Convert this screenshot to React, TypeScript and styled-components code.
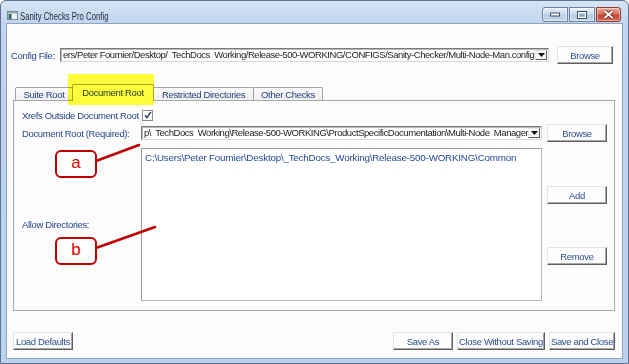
import React from "react";
import styled, { createGlobalStyle } from "styled-components";

const font = `"Liberation Sans", Arial, sans-serif`;
const labelBlue = "#27478c";

const Global = createGlobalStyle`
  html, body { margin: 0; padding: 0; background: #ffffff; }
  body { font-family: ${font}; letter-spacing: -0.35px; }
  * { box-sizing: border-box; }
`;

const Window = styled.div`
  position: relative;
  width: 629px;
  height: 364px;
  display: flex;
  flex-direction: column;
  background: linear-gradient(180deg, #d6e4f5 0px, #c0d5ee 23px, #bad2ec 100%);
  border: 1px solid #5b7290;
  border-radius: 6px 6px 0 0;
  overflow: hidden;
`;

const TitleBar = styled.div`
  height: 23px;
  display: flex;
  align-items: flex-start;
  padding-left: 6px;
`;

const AppIcon = styled.svg`
  margin-top: 10px;
  width: 11px;
  height: 9px;
  flex: none;
`;

const Title = styled.div`
  margin: 8px 0 0 2px;
  font-size: 10.5px;
  line-height: 14px;
  letter-spacing: 0;
  color: #1b2636;
  white-space: nowrap;
  transform: scaleX(0.74);
  transform-origin: left center;
`;

const Controls = styled.div`
  margin: 6px 7px 0 auto;
  display: flex;
  gap: 1px;
`;

const CtlButton = styled.div<{ $close?: boolean; $first?: boolean }>`
  width: ${(p) => (p.$close ? 25 : 26)}px;
  height: 15px;
  display: flex;
  align-items: center;
  justify-content: center;
  border: 1px solid ${(p) => (p.$close ? "#8d3b33" : "#6e829e")};
  border-radius: ${(p) => (p.$close ? "0 3px 3px 0" : p.$first ? "3px 0 0 3px" : "0")};
  background: ${(p) =>
    p.$close
      ? "linear-gradient(180deg, #e9a996 0%, #d67662 45%, #c2432f 55%, #cf6a55 100%)"
      : "linear-gradient(180deg, #e8eff8 0%, #cfdcec 45%, #b8cbe2 55%, #c7d7ea 100%)"};
  box-shadow: inset 0 0 0 1px rgba(255, 255, 255, 0.45);
`;

const Client = styled.div`
  flex: 1;
  margin: 0 6px 5px 6px;
  background: #fcfcfc;
  box-shadow: 0 0 0 1px #8ea5c2;
  display: flex;
  flex-direction: column;
  padding: 0 7px 8px 6px;
`;

const Label = styled.div<{ $w?: number }>`
  font-size: 9.5px;
  color: ${labelBlue};
  white-space: nowrap;
  ${(p) => (p.$w ? `width: ${p.$w}px; flex: none;` : "")}
`;

const ConfigRow = styled.div`
  margin: 22px 2px 0 -2px;
  height: 18px;
  display: flex;
  align-items: center;
`;

const Combo = styled.div`
  height: 14px;
  flex: 1;
  min-width: 0;
  display: flex;
  align-items: center;
  background: #ffffff;
  border: 1px solid;
  border-color: #7a7a7a #d8d8d8 #d8d8d8 #7a7a7a;
  box-shadow: inset 1px 1px 0 #b9b9b9;
  padding: 0 1px 0 2px;
`;

const ComboText = styled.div`
  flex: 1;
  min-width: 0;
  overflow: hidden;
  white-space: pre;
  font-size: 9.5px;
  letter-spacing: -0.45px;
  line-height: 12px;
  color: #1c1c1c;
`;

const DropButton = styled.div`
  width: 12px;
  height: 10px;
  flex: none;
  display: flex;
  align-items: center;
  justify-content: center;
  background: #fafafa;
  border: 1px solid;
  border-color: #e8e8e8 #5c5c5c #5c5c5c #e8e8e8;
`;

const Button = styled.div<{ $w: number; $push?: boolean }>`
  width: ${(p) => p.$w}px;
  height: 18px;
  flex: none;
  display: flex;
  align-items: center;
  justify-content: center;
  background: #fdfdfd;
  border: 1px solid;
  border-color: #e4e4e4 #5e5e5e #5e5e5e #e4e4e4;
  box-shadow: inset -1px -1px 0 #a9a9a9;
  font-size: 9.5px;
  color: #2c4c92;
  white-space: nowrap;
  ${(p) => (p.$push ? "margin-left: auto;" : "")}
`;

const ConfigBrowse = styled(Button)`
  margin-left: 8px;
`;

const TabStrip = styled.div`
  margin-top: 20px;
  margin-bottom: -1px;
  height: 17px;
  display: flex;
  align-items: flex-end;
  padding-left: 2px;
  position: relative;
  z-index: 1;
`;

const Tab = styled.div<{ $w: number; $active?: boolean }>`
  width: ${(p) => p.$w}px;
  height: ${(p) => (p.$active ? 17 : 13)}px;
  margin-bottom: ${(p) => (p.$active ? 0 : 1)}px;
  margin-left: -1px;
  display: flex;
  align-items: center;
  justify-content: center;
  padding-bottom: ${(p) => (p.$active ? 1 : 0)}px;
  background: ${(p) => (p.$active ? "#fcfcfc" : "linear-gradient(180deg, #fbfbfb, #efefef)")};
  border: 1px solid #a3a3a3;
  border-bottom: none;
  border-radius: 2px 2px 0 0;
  font-size: 9.5px;
  color: #24407e;
  white-space: nowrap;
  &:first-child { margin-left: 0; }
`;

const Panel = styled.div`
  flex: 1;
  border: 1px solid #a9a9a9;
  background: #fcfcfc;
  display: grid;
  grid-template-columns: 114px 1fr 60px;
  grid-template-rows: 14px 18px 1fr;
  column-gap: 5px;
  row-gap: 2px;
  padding: 7px 7px 9px 8px;
  align-items: center;
`;

const Check = styled.div`
  width: 11px;
  height: 11px;
  margin-left: 1px;
  background: #ffffff;
  border: 1px solid #8e8f8f;
  display: flex;
  align-items: center;
  justify-content: center;
`;

const ListBox = styled.div`
  align-self: stretch;
  margin-top: 4px;
  background: #ffffff;
  border: 1px solid;
  border-color: #9a9a9a #b5b5b5 #b5b5b5 #9a9a9a;
  padding: 2px 3px;
  font-size: 9.8px;
  letter-spacing: -0.2px;
  line-height: 14px;
  color: #254a96;
  white-space: nowrap;
  overflow: hidden;
`;

const SideLabel = styled(Label)`
  align-self: center;
  margin-top: 4px;
`;

const SideButtons = styled.div`
  align-self: stretch;
  display: flex;
  flex-direction: column;
  padding-top: 42px;
  gap: 43px;
`;

const BottomRow = styled.div`
  margin-top: 21px;
  height: 18px;
  display: flex;
  gap: 4px;
`;

const Highlight = styled.div`
  position: absolute;
  left: 67px;
  top: 73px;
  width: 86px;
  height: 31px;
  background: #ffff3a;
  mix-blend-mode: multiply;
  z-index: 5;
  pointer-events: none;
`;

const Callout = styled.div<{ $top: number }>`
  position: absolute;
  left: 54px;
  top: ${(p) => p.$top}px;
  width: 42px;
  height: 28px;
  border: 2px solid #c00000;
  border-radius: 6px;
  background: #ffffff;
  display: flex;
  align-items: center;
  justify-content: center;
  font-family: "Liberation Sans", Arial, sans-serif;
  letter-spacing: 0;
  font-size: 17px;
  color: #e00000;
  padding-bottom: 2px;
  z-index: 6;
`;

const Lines = styled.svg`
  position: absolute;
  left: 0;
  top: 0;
  width: 627px;
  height: 362px;
  z-index: 6;
  pointer-events: none;
`;

const DownArrow = () => (
  <svg width="7" height="4" viewBox="0 0 7 4">
    <path d="M0 0 H7 L3.5 4 Z" fill="#111" />
  </svg>
);

export default function App() {
  return (
    <>
      <Global />
      <Window>
        <TitleBar>
          <AppIcon viewBox="0 0 11 9">
            <rect x="0.5" y="0.5" width="10" height="8" fill="#eef1f4" stroke="#7d8895" />
            <rect x="1" y="1" width="9" height="1.5" fill="#9aa7b6" />
            <rect x="1.5" y="3" width="3" height="5" fill="#2f6a52" />
          </AppIcon>
          <Title>Sanity Checks Pro Config</Title>
          <Controls>
            <CtlButton $first>
              <svg width="10" height="5" viewBox="0 0 10 5">
                <rect x="0.5" y="1" width="9" height="3" fill="#ffffff" stroke="#3b4f6d" />
              </svg>
            </CtlButton>
            <CtlButton>
              <svg width="10" height="8" viewBox="0 0 10 8">
                <rect x="0.5" y="0.5" width="9" height="7" fill="none" stroke="#3b4f6d" />
                <rect x="1.5" y="1.5" width="7" height="5" fill="none" stroke="#ffffff" />
                <rect x="2.5" y="3" width="5" height="2.5" fill="#8fa3bd" />
              </svg>
            </CtlButton>
            <CtlButton $close>
              <svg width="11" height="9" viewBox="0 0 11 9">
                <path d="M1.5 1 L9.5 8 M9.5 1 L1.5 8" stroke="#6b1d15" strokeWidth="3.6" />
                <path d="M1.5 1 L9.5 8 M9.5 1 L1.5 8" stroke="#ffffff" strokeWidth="2" />
              </svg>
            </CtlButton>
          </Controls>
        </TitleBar>

        <Client>
          <ConfigRow>
            <Label $w={49}>Config File:</Label>
            <Combo>
              <ComboText>
                {"ers/Peter Fournier/Desktop/  TechDocs  Working/Release-500-WORKING/CONFIGS/Sanity-Checker/Multi-Node-Man.config"}
              </ComboText>
              <DropButton>
                <DownArrow />
              </DropButton>
            </Combo>
            <ConfigBrowse $w={56}>Browse</ConfigBrowse>
          </ConfigRow>

          <TabStrip>
            <Tab $w={58}>Suite Root</Tab>
            <Tab $w={82} $active>
              Document Root
            </Tab>
            <Tab $w={101}>Restricted Directories</Tab>
            <Tab $w={70}>Other Checks</Tab>
          </TabStrip>

          <Panel>
            <Label>Xrefs Outside Document Root</Label>
            <Check>
              <svg width="8" height="8" viewBox="0 0 8 8">
                <path d="M1 4.2 L3 6.5 L7 0.8" fill="none" stroke="#2a3d66" strokeWidth="1.4" />
              </svg>
            </Check>
            <div />

            <Label>Document Root (Required):</Label>
            <Combo>
              <ComboText>
                {"p\\  TechDocs  Working\\Release-500-WORKING\\ProductSpecificDocumentation\\Multi-Node  Manager"}
              </ComboText>
              <DropButton>
                <DownArrow />
              </DropButton>
            </Combo>
            <Button $w={60}>Browse</Button>

            <SideLabel>Allow Directories:</SideLabel>
            <ListBox>
              {"C:\\Users\\Peter Fournier\\Desktop\\_TechDocs_Working\\Release-500-WORKING\\Common"}
            </ListBox>
            <SideButtons>
              <Button $w={60}>Add</Button>
              <Button $w={60}>Remove</Button>
            </SideButtons>
          </Panel>

          <BottomRow>
            <Button $w={60}>Load Defaults</Button>
            <Button $w={60} $push>
              Save As
            </Button>
            <Button $w={88}>Close Without Saving</Button>
            <Button $w={66}>Save and Close</Button>
          </BottomRow>
        </Client>

        <Highlight />
        <Callout $top={149}>a</Callout>
        <Callout $top={236}>b</Callout>
        <Lines viewBox="0 0 627 362">
          <path d="M95 160 L138 144" stroke="#c00000" strokeWidth="2.5" strokeLinecap="round" />
          <path d="M95 247 L154 226" stroke="#c00000" strokeWidth="2.5" strokeLinecap="round" />
        </Lines>
      </Window>
    </>
  );
}
